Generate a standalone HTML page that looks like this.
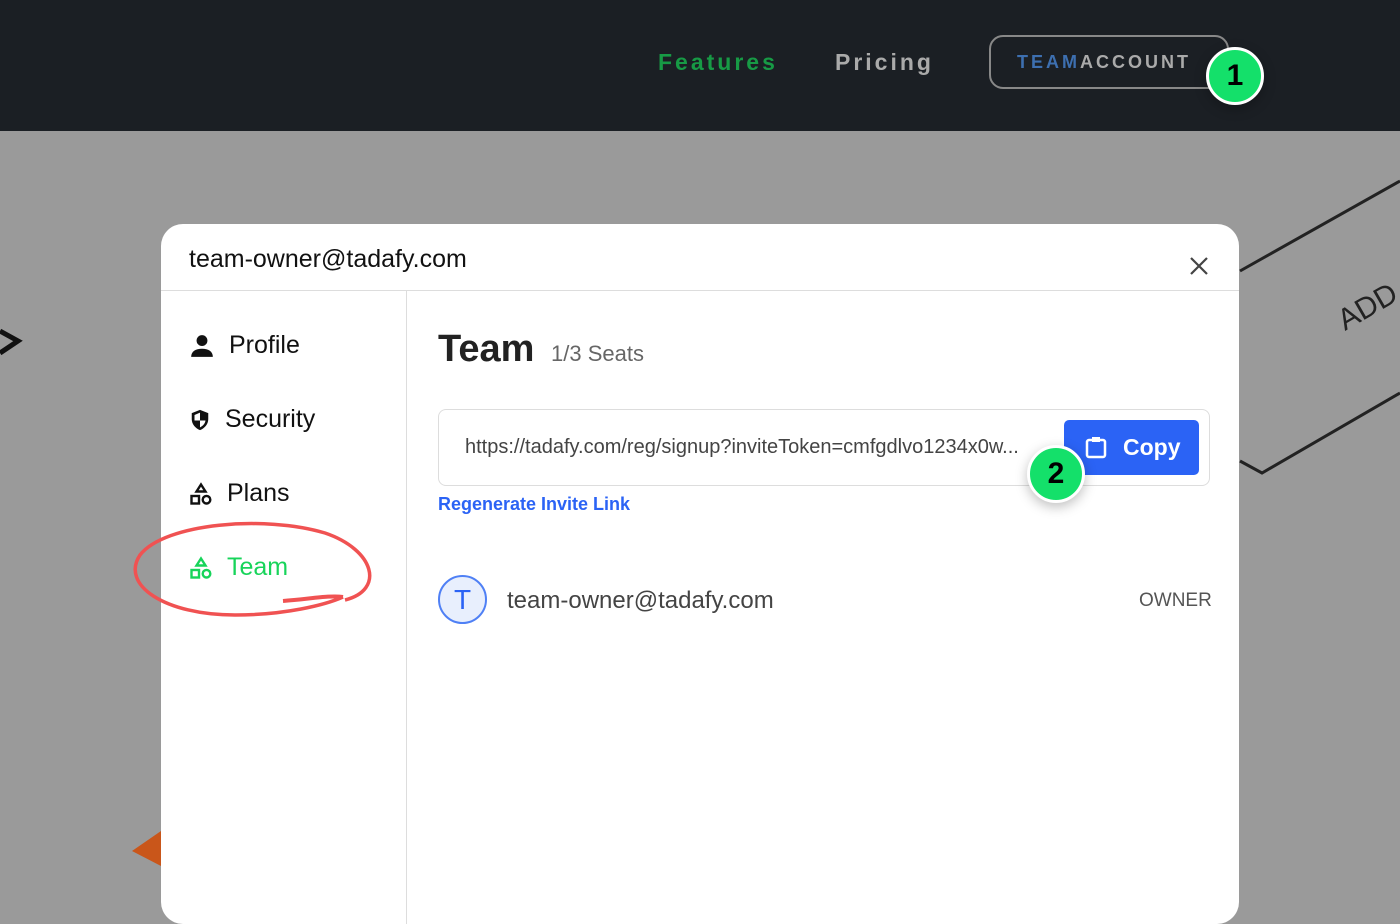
<!DOCTYPE html>
<html><head><style>
*{margin:0;padding:0;box-sizing:border-box}
body{width:1400px;height:875px;overflow:hidden;position:relative;font-family:"Liberation Sans",sans-serif;background:#9a9a9a}
.top{position:absolute;left:0;top:0;width:1400px;height:131px;background:#1b1f24}
.nav{position:absolute;top:49px;font-weight:bold;font-size:23px;letter-spacing:3px}
.acct{position:absolute;left:989px;top:35px;width:240px;height:54px;border:2px solid #888;border-radius:14px;font-weight:bold;font-size:18px;letter-spacing:3px;color:#aaa;padding:15px 0 0 26px}
.badge{position:absolute;width:58px;height:58px;border-radius:50%;background:#14e06a;border:3px solid #fff;color:#000;font-weight:bold;font-size:30px;text-align:center;line-height:52px;box-shadow:0 4px 12px rgba(0,0,0,.25)}
.modal{position:absolute;left:161px;top:224px;width:1078px;height:700px;background:#fff;border-radius:22px}
.hdr{height:67px;border-bottom:1px solid #ddd;font-size:25px;color:#111;padding:21px 0 0 28px}
.side{position:absolute;left:245px;top:67px;bottom:0;border-left:1px solid #ddd}
.item{position:absolute;left:28px;font-size:25px;color:#111;display:flex;align-items:center;gap:14px}
</style></head><body>
<svg style="position:absolute;left:0;top:131px" width="1400" height="744">
<path d="M1240 140 L1400 50" stroke="#222" stroke-width="3" fill="none"/>
<path d="M1240 330 L1262 342 L1400 262" stroke="#222" stroke-width="3" fill="none"/>
<text x="1345" y="200" transform="rotate(-30 1345 200)" font-family="Liberation Sans" font-size="30" fill="#222">ADD</text>
<path d="M0 200 L18 210 L0 222" stroke="#111" stroke-width="5" fill="none"/>
<path d="M161 700 L132 720 L161 735 Z" fill="#c9561a"/>
</svg>
<div class="top"></div>
<div class="nav" style="left:658px;color:#179a45">Features</div>
<div class="nav" style="left:835px;color:#aaa">Pricing</div>
<div class="acct"><span style="color:#3d6fb0">TEAM</span>ACCOUNT</div>
<div class="badge" style="left:1206px;top:47px">1</div>
<div class="modal">
<div class="hdr">team-owner@tadafy.com</div>
<svg style="position:absolute;left:1028px;top:32px" width="20" height="20"><path d="M2 2L18 18M18 2L2 18" stroke="#444" stroke-width="2.2"/></svg>
<div class="side"></div>
<div class="item" style="top:107px"><svg width="26" height="26" viewBox="0 0 24 24"><circle cx="12" cy="7" r="5" fill="#111"/><path d="M2 22c0-5 4-7.5 10-7.5s10 2.5 10 7.5z" fill="#111"/></svg>Profile</div>
<div class="item" style="top:181px"><svg width="22" height="26" viewBox="0 0 24 24"><path d="M12 1L3 4.5v6.5c0 5.5 4 10 9 12 5-2 9-6.5 9-12V4.5z" fill="#111"/><path d="M12 4v8.5H6V6.5z M12 12.5h6c-.5 3.5-3 6-6 7.5z" fill="#fff"/></svg>Security</div>
<div class="item" style="top:255px"><svg width="24" height="24" viewBox="0 0 24 24"><path d="M12 2.5l4.5 7h-9z" fill="none" stroke="#111" stroke-width="2.4"/><rect x="2.5" y="14" width="7.5" height="7.5" fill="none" stroke="#111" stroke-width="2.4"/><circle cx="17.5" cy="17.7" r="3.8" fill="none" stroke="#111" stroke-width="2.4"/></svg>Plans</div>
<div class="item" style="top:329px;color:#17d45a"><svg width="24" height="24" viewBox="0 0 24 24"><path d="M12 2.5l4.5 7h-9z" fill="none" stroke="#17d45a" stroke-width="2.4"/><rect x="2.5" y="14" width="7.5" height="7.5" fill="none" stroke="#17d45a" stroke-width="2.4"/><circle cx="17.5" cy="17.7" r="3.8" fill="none" stroke="#17d45a" stroke-width="2.4"/></svg>Team</div>
<div style="position:absolute;left:277px;top:104px;font-size:38px;font-weight:bold;color:#222">Team <span style="font-size:22px;font-weight:normal;color:#666;margin-left:6px">1/3 Seats</span></div>
<div style="position:absolute;left:277px;top:185px;width:772px;height:77px;border:1.5px solid #ddd;border-radius:8px;font-size:20px;color:#444;padding:26px 0 0 26px">https://tadafy.com/reg/signup?inviteToken=cmfgdlvo1234x0w...</div>
<div style="position:absolute;left:903px;top:196px;width:135px;height:55px;background:#2b63f5;border-radius:5px;color:#fff;font-size:23px;font-weight:bold;padding:14px 0 0 59px">Copy</div>
<svg style="position:absolute;left:924px;top:211px" width="22" height="24" viewBox="0 0 22 24"><rect x="2" y="5" width="18" height="17" rx="2" fill="none" stroke="#fff" stroke-width="2.5"/><rect x="7" y="2" width="8" height="5" fill="#fff"/></svg>
<div style="position:absolute;left:277px;top:270px;font-size:18px;color:#2b63f5;font-weight:bold">Regenerate Invite Link</div>
<div style="position:absolute;left:277px;top:351px;width:49px;height:49px;border-radius:50%;border:2px solid #4f80f5;background:#e8effd;color:#2b63f5;font-size:28px;text-align:center;line-height:45px">T</div>
<div style="position:absolute;left:346px;top:363px;font-size:24px;color:#444">team-owner@tadafy.com</div>
<div style="position:absolute;left:978px;top:366px;font-size:19px;color:#555">OWNER</div>
</div>
<div class="badge" style="left:1027px;top:445px">2</div>
<svg style="position:absolute;left:125px;top:515px" width="250" height="115"><path d="M220 85 C260 75 250 35 200 18 C140 0 40 8 15 40 C-5 70 40 100 110 100 C160 100 200 90 218 82" stroke="#f05252" stroke-width="3.5" fill="none"/><path d="M158 86 C185 84 205 80 218 82" stroke="#f05252" stroke-width="4" fill="none"/></svg>
</body></html>
